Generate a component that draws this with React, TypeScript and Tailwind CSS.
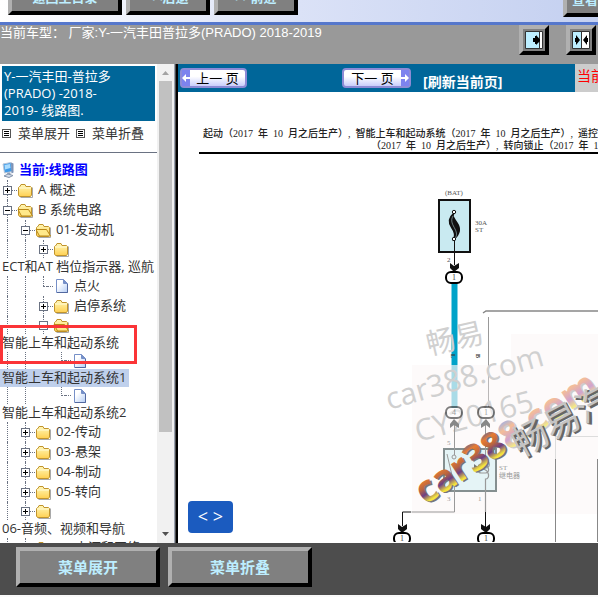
import type { ReactNode } from 'react';

type RowProps = {
  level?: number;
  sign?: '+' | '-';
  icon: 'folder' | 'open' | 'page';
  label?: string;
  wrapped?: string;
  selected?: boolean;
};

const rows: RowProps[] = [
  { level: 0, sign: '+', icon: 'folder', label: 'A 概述' },
  { level: 0, sign: '-', icon: 'open', label: 'B 系统电路' },
  { level: 1, sign: '-', icon: 'open', label: '01-发动机' },
  { level: 2, sign: '+', icon: 'folder', wrapped: 'ECT和AT 档位指示器, 巡航' },
  { level: 2, icon: 'page', label: '点火' },
  { level: 2, sign: '+', icon: 'folder', label: '启停系统' },
  { level: 2, sign: '-', icon: 'open', wrapped: '智能上车和起动系统' },
  { level: 3, icon: 'page', wrapped: '智能上车和起动系统1', selected: true },
  { level: 3, icon: 'page', wrapped: '智能上车和起动系统2' },
  { level: 1, sign: '+', icon: 'folder', label: '02-传动' },
  { level: 1, sign: '+', icon: 'folder', label: '03-悬架' },
  { level: 1, sign: '+', icon: 'folder', label: '04-制动' },
  { level: 1, sign: '+', icon: 'folder', label: '05-转向' },
  { level: 1, sign: '+', icon: 'folder', wrapped: '06-音频、视频和导航' },
  { level: 1, sign: '+', icon: 'folder', label: '07-电源和网络' },
];

const FolderIcon = ({ open }: { open?: boolean }) => (
  <svg width="18" height="18" viewBox="0 0 18 18" className="shrink-0">
    <defs>
      <linearGradient id="folder" x1="0" y1="0" x2="0" y2="1">
        <stop offset="0" stopColor="#fff8b8" />
        <stop offset="1" stopColor="#ffd052" />
      </linearGradient>
    </defs>
    <path d="M3.5 16.5h12v-10" fill="none" stroke="#a9a9a9" />
    <path
      d="M1.5 14V6.5l1-1H3l1-2h4l1 2h4.5l1 1V14l-1 1.5h-11z"
      fill="url(#folder)"
      stroke="#c1942c"
    />
    {open ? (
      <path d="M1 8.5h10.5l4 6.5H4.5z" fill="#ffe98a" stroke="#b98716" />
    ) : (
      <path d="M2 7h12" stroke="#fffbd6" />
    )}
  </svg>
);

const PageIcon = () => (
  <svg width="18" height="18" viewBox="0 0 18 18" className="shrink-0">
    <defs>
      <linearGradient id="page" x1="0" y1="0" x2="1" y2="1">
        <stop offset="0.3" stopColor="#fff" />
        <stop offset="1" stopColor="#b4cdf5" />
      </linearGradient>
    </defs>
    <path d="M3.5 2.5h7l4 4v9h-11z" fill="url(#page)" stroke="#7690c8" />
    <path d="M10.5 2.5v4h4" fill="#7690c8" stroke="#7690c8" />
    <path d="M4 15.5h10.5V7" fill="none" stroke="#52689f" />
  </svg>
);

const Toggle = ({ sign }: { sign: '+' | '-' }) => (
  <button
    type="button"
    aria-label={sign === '+' ? '展开' : '折叠'}
    className="relative size-[9px] shrink-0 border border-gray-500 bg-white"
  >
    <svg viewBox="0 0 7 7" className="block size-[7px]" shapeRendering="crispEdges">
      <path d={sign === '+' ? 'M1 3h5v1H1zM3 1h1v5H3z' : 'M1 3h5v1H1z'} />
    </svg>
  </button>
);

const Row = ({ level = 0, sign, icon, label, wrapped, selected }: RowProps) => (
  <li>
    <div
      className={`flex items-center ${
        label ? 'h-5' : icon === 'page' ? 'h-[17px]' : 'h-[18px]'
      }`}
    >
      {Array.from({ length: level }, (_, i) => (
        <span key={i} className="flex w-[18px] shrink-0 justify-center self-stretch pr-[3px]">
          {i < 2 && <span className="border-l border-dotted border-gray-500" />}
        </span>
      ))}
      <span className="relative flex w-[17px] shrink-0 items-center self-stretch pl-[3px]">
        <span
          className={`absolute top-0 left-[7px] border-l border-dotted border-gray-500 ${
            sign ? 'bottom-0' : 'bottom-1/2'
          }`}
        />
        {sign ? (
          <Toggle sign={sign} />
        ) : (
          <span className="ml-1 w-1 border-t border-dotted border-gray-500" />
        )}
        <span className="flex-1 border-t border-dotted border-gray-500" />
      </span>
      {icon === 'page' ? <PageIcon /> : <FolderIcon open={icon === 'open'} />}
      {label && (
        <a href="#" className="pl-[3px] whitespace-nowrap">
          {label}
        </a>
      )}
    </div>
    {wrapped && (
      <div className="flex h-[18px] whitespace-nowrap">
        <a
          href="#"
          className={`flex items-center pr-[3px] pl-0.5 ${selected ? 'bg-[#bfd0ec]' : ''}`}
        >
          {wrapped}
        </a>
      </div>
    )}
  </li>
);

const BevelButton = ({ children, className = '' }: { children: ReactNode; className?: string }) => (
  <button
    type="button"
    className={`shrink-0 border-4 border-t-[#b0b0b0] border-r-black border-b-black border-l-[#b0b0b0] bg-[#808080] font-bold whitespace-nowrap text-[#bdeeff] ${className}`}
  >
    {children}
  </button>
);

const ListIcon = () => (
  <svg width="9" height="9" viewBox="0 0 9 9" shapeRendering="crispEdges" className="shrink-0">
    <path d="M.5.5h8v8h-8z" fill="#fff" stroke="#555" />
    <path d="M2 2h5v1H2zM2 4h5v1H2zM2 6h5v1H2z" />
  </svg>
);

const Sidebar = () => (
  <aside className="flex w-[178px] shrink-0 text-[13px] text-[#333]">
    <div className="min-w-0 flex-1 overflow-hidden bg-white">
      <h1 className="mx-0.5 mt-0.5 bg-[#006699] px-0.5 pt-0.5 pb-0.5 leading-[17px] text-white">
        Y-一汽丰田-普拉多 <br />
        (PRADO) -2018-
        <br />
        2019- 线路图.
      </h1>
      <div className="flex h-8 items-center border-b border-gray-500 pb-1.5 pl-0.5 whitespace-nowrap">
        <ListIcon />
        <a href="#" className="pr-1.5 pl-[7px]">
          菜单展开
        </a>
        <ListIcon />
        <a href="#" className="pl-[7px]">
          菜单折叠
        </a>
      </div>
      <div className="mt-[7px] flex h-5 items-center font-bold text-[#0000ff]">
        <svg width="18" height="18" viewBox="0 0 18 18" className="shrink-0">
          <path d="M3 3l8-1.5 1.500 9-8 1.500z" fill="#3f9be8" stroke="#b9c6d8" />
          <path d="M4.500 4l5.500-1 .5 4-5.500 1.500z" fill="#a9dcff" />
          <path d="M11 1.500l2.500 1v9l-2 1z" fill="#7d92b5" />
          <path d="M7 12l3-.5 1 2-3 1z" fill="#8fa0b8" />
          <path d="M4 15l4-2 5 1.500-4 2z" fill="#d6deea" stroke="#8493ab" />
        </svg>
        <a href="#" className="pl-px">
          当前:线路图
        </a>
      </div>
      <ul>
        {rows.map((row, i) => (
          <Row key={i} {...row} />
        ))}
      </ul>
    </div>
    <div className="flex w-[17px] shrink-0 flex-col items-center bg-[#f1f1f1]">
      <svg width="17" height="17" viewBox="0 0 17 17" className="shrink-0">
        <path d="M5 11l3.5-4 3.5 4z" fill="#a3a3a3" />
      </svg>
      <div className="w-[13px] flex-[351] bg-[#c1c1c1]" />
      <div className="flex-[94]" />
      <svg width="17" height="17" viewBox="0 0 17 17" className="shrink-0">
        <path d="M5 6l3.5 4L12 6z" fill="#505050" />
      </svg>
    </div>
    <div className="w-1 shrink-0 border-r-2 border-l border-r-black border-l-gray-400 bg-[#4d4d4d]" />
  </aside>
);

const PageButton = ({ label, next }: { label: string; next?: boolean }) => (
  <button
    type="button"
    className={`flex h-5 items-stretch rounded-sm border-2 border-[#8d8bd6] bg-linear-to-b from-white from-40% to-[#c9cdfa] text-[13px] leading-4 text-black ${
      next ? 'w-[69px] flex-row-reverse' : 'w-[67px]'
    }`}
  >
    <span className="flex w-2 items-center justify-center bg-[#7d83ee]">
      <svg width="8" height="8" viewBox="0 0 8 8">
        <path
          d={next ? 'M0 3h4V0l4 4-4 4V5H0z' : 'M8 3H4V0L0 4l4 4V5h4z'}
          fill="#fff"
        />
      </svg>
    </span>
    <span className="flex-1 whitespace-nowrap">{label}</span>
  </button>
);

const Terminal = ({ x, y, faded, label = '1' }: { x: number; y: number; faded?: boolean; label?: string }) => (
  <g opacity={faded ? 0.5 : 1}>
    <rect x={x - 8} y={y - 5} width="16" height="11" rx="5" fill="#fff" stroke="#000" strokeWidth="2" />
    <text x={x} y={y + 3} textAnchor="middle" fontSize="8" fill="#444">
      {label}
    </text>
  </g>
);

const Diagram = () => (
  <svg
    width="420"
    height="388"
    viewBox="178 155 420 388"
    className="block shrink-0 font-['Liberation_Serif','Noto_Sans_CJK_SC',serif]"
  >
    <defs>
      <linearGradient id="rainbow" x1="0" y1="0" x2="0" y2="1">
        <stop offset="0.2" stopColor="#4a5fa8" />
        <stop offset="0.35" stopColor="#e77c32" />
        <stop offset="0.5" stopColor="#b9653f" />
        <stop offset="0.62" stopColor="#6c3f86" />
        <stop offset="0.76" stopColor="#f4e53c" />
      </linearGradient>
      <linearGradient id="rainbowPale" x1="0" y1="0" x2="0" y2="1">
        <stop offset="0.25" stopColor="#a8b4dd" />
        <stop offset="0.4" stopColor="#f4bd98" />
        <stop offset="0.6" stopColor="#d0a3cf" />
        <stop offset="0.76" stopColor="#f3ea86" />
      </linearGradient>
    </defs>
    <g fill="#555" fontSize="7">
      <text x="445" y="196">(BAT)</text>
      <text x="475" y="226">30A</text>
      <text x="475" y="233">ST</text>
      <text x="447" y="263">2</text>
    </g>
    <rect x="439" y="201" width="31" height="52" fill="#c9eaf1" stroke="#111" strokeWidth="2" />
    <path
      d="M454 214c-7 6-5 11-2 15s3 8 2 11c6-5 7-10 3-16s-5-7-3-10z"
      fill="#111"
      stroke="#111"
      strokeWidth="1.5"
    />
    <path d="M453 217c-3 5 0 9 2 13s2 7 0 9" fill="none" stroke="#c9eaf1" strokeWidth="0.5" />
    <circle cx="454" cy="213" r="1.7" fill="#fff" stroke="#111" />
    <circle cx="454" cy="240" r="1.7" fill="#fff" stroke="#111" />
    <path d="M454.5 242v24" stroke="#111" />
    <path d="M450 264l4 3 5-3v5l-5 4-4-4z" fill="#111" />
    <path d="M454.5 284v82" stroke="#00a3c9" strokeWidth="6" />
    <path d="M454.5 366v43" stroke="#7fcfe2" strokeWidth="6" />
    <Terminal x={454} y={278} />
    <path d="M483 314l3-2h112" fill="none" stroke="#888" strokeWidth="1.5" />
    <path d="M488.5 318v90" stroke="#999" />
    <path d="M412 366h99V335h87v180H412z" fill="#f8f0f0" opacity="0.35" />
    <g fill="#d0d0d0" className="font-['Open_Sans','Noto_Sans_CJK_SC',sans-serif]">
      <text transform="translate(429 356) rotate(-13)" fontSize="29">
        畅易
      </text>
      <text transform="translate(389 411) rotate(-16)" fontSize="30">
        car388.com
      </text>
      <text transform="translate(418 443) rotate(-15)" fontSize="30">
        CY20165
      </text>
    </g>
    <g fill="#333" fontSize="6" fontWeight="bold">
      <text transform="translate(451 355) rotate(90)">L</text>
      <text transform="translate(476 355) rotate(90)">B</text>
    </g>
    <Terminal x={454} y={413} faded label="4" />
    <Terminal x={486} y={413} faded />
    <g fill="none" stroke="#999">
      <rect x="444" y="450" width="52" height="42" fill="#def3f5" fillOpacity="0.8" stroke="#858f90" strokeWidth="2" />
      <path d="M454.5 425v31M485.500 425v37" />
      <path d="M447 455l7 30M454.5 487v26h-43" />
      <circle cx="454" cy="458" r="2" />
      <circle cx="454" cy="485" r="2" />
      <path
        d="M485.5 462c5 0 5 7 0 7h-4c-4 0-4-4 0-4 8 0 9 9 4 9h-4c-4 0-4-4 0-4 8 0 9 10 4 10v33"
        strokeWidth="1.2"
      />
    </g>
    <path d="M474 465l4 3-4 2z" fill="#777" />
    <path d="M450 425l4-5 5 5v4l-5-3-4 3zM481 425l5-5 4 5v4l-4-3-5 3z" fill="#888" />
    <path d="M555.5 437v23M555.5 437.5H598" stroke="#ddd" fill="none" />
    <path d="M555.5 460v83M597.5 460v83" stroke="#888" />
    <g fill="#999" fontSize="7">
      <text x="447" y="446">5</text>
      <text x="447" y="502">3</text>
      <text x="478" y="502">1</text>
      <text x="499" y="471">ST</text>
      <text x="499" y="479">继电器</text>
    </g>
    <path d="M411 513h-8.5v14M485.5 513v15" fill="none" stroke="#111" />
    <path
      d="M398 525l4 3 5-3v5l-5 4-4-4zM481 525l5 3 4-3v5l-4 4-5-4z"
      fill="#111"
    />
    <Terminal x={402} y={539} />
    <Terminal x={486} y={539} />
    <g
      className="font-['Open_Sans','Noto_Sans_CJK_SC',sans-serif]"
      fontSize="37"
      fontWeight="bold"
      aria-label="car388.com"
    >
      {/* one <text> per glyph so that the gradient restarts on each */}
      {[...'car388.com'].map((char, i) => {
        const offset = [0, 19, 41, 58, 79, 100, 121, 131, 150, 173][i];
        const pale = i > 4;
        return (
          <g key={i} transform={`translate(425 506) rotate(-33) translate(${offset} 0)`}>
            <text x="1" y="2" fill={pale ? '#ccc' : '#777'}>
              {char}
            </text>
            <text fill={pale ? 'url(#rainbowPale)' : 'url(#rainbow)'}>{char}</text>
          </g>
        );
      })}
    </g>
    <g
      className="font-['Noto_Sans_CJK_SC',sans-serif]"
      transform="translate(522 460) rotate(-28)"
      fontSize="36"
      fontWeight="bold"
    >
      <text fill="#666">畅易汽车</text>
      <text x="-1" y="-2" fill="#c4c4c4" fontWeight="normal">
        畅易汽车
      </text>
    </g>
  </svg>
);

const Viewer = () => (
  <main className="relative flex min-w-0 flex-1 flex-col overflow-hidden bg-white">
    <div className="flex h-7 shrink-0 bg-[#006699]">
      <div className="flex min-w-0 flex-1 items-start pt-1 pl-0.5">
        <PageButton label="上一 页" />
        <div className="ml-[95px]">
          <PageButton label="下一 页" next />
        </div>
        <a
          href="#"
          className="pt-1 pl-3 text-sm font-bold whitespace-nowrap text-white"
        >
          [刷新当前页]
        </a>
      </div>
      <div className="w-[23px] shrink-0 overflow-hidden bg-[#ccc] pt-0.5 pl-0.5 text-sm whitespace-nowrap text-[#ff0000]">
        当前位置
      </div>
    </div>
    <div className="mt-9 ml-[21px] border-b-2 border-black font-['Liberation_Serif','Noto_Sans_CJK_SC',serif] text-[10px] leading-3 font-medium whitespace-pre text-[#222]">
      <p className="pl-1">起动（2017  年  10  月之后生产）,  智能上车和起动系统（2017  年  10  月之后生产）,  遥控门锁</p>
      <p className="pl-[172px]">（2017  年  10  月之后生产）,  转向锁止（2017  年  10  月之后生产）</p>
    </div>
    <Diagram />
    <button
      type="button"
      className="absolute bottom-2.5 left-2.5 h-8 w-[45px] rounded-sm bg-[#1b5bbf] pb-0.5 text-lg leading-none font-medium text-white"
    >
      &lt; &gt;
    </button>
  </main>
);

const App = () => (
  <div className="flex h-screen flex-col overflow-hidden bg-[#fafafa] font-['Open_Sans','Noto_Sans_CJK_SC',sans-serif]">
    <div className="flex h-[25px] shrink-0 items-end overflow-hidden border-b-3 border-[#5577cc] bg-linear-to-r from-white via-[#dbe2f7] to-[#c4d0f0] text-[13px]">
      <div className="flex min-w-0 flex-1 items-end gap-1 pb-[7px] pl-2">
        <BevelButton className="h-[34px] w-[114px]">返回主目录</BevelButton>
        <BevelButton className="h-[34px] w-[84px]">&lt;&lt;后退</BevelButton>
        <BevelButton className="h-[34px] w-[84px]">&gt;&gt;前进</BevelButton>
      </div>
      <div className="w-[35px] shrink-0 overflow-hidden pb-[5px]">
        <BevelButton className="h-[34px] w-[70px]">查看全部</BevelButton>
      </div>
    </div>
    <header className="flex h-[39px] shrink-0 items-start justify-between bg-[#999] font-['Liberation_Sans','Noto_Sans_CJK_SC',sans-serif] text-[13px] leading-4 text-white">
      <p className="whitespace-nowrap">当前车型：  厂家:Y-一汽丰田普拉多(PRADO) 2018-2019</p>
      <div className="flex gap-[17px] pr-0.5">
        <BevelButton className="size-[30px]">
          <svg width="22" height="22" viewBox="0 0 22 22">
            <path d="M2.5 2.5h17v17h-17z" fill="#bdeeff" stroke="#333" />
            <path d="M18 3v16" stroke="#fff" strokeWidth="2" />
            <path d="M16.5 3v16" stroke="#333" />
            <path d="M10 9h2V7h1V6l4 4.500V12l-4 4v-1h-1v-2h-2z" />
          </svg>
        </BevelButton>
        <BevelButton className="size-[30px]">
          <svg width="22" height="22" viewBox="0 0 22 22">
            <path d="M2.5 2.5h17v17h-17z" fill="#bdeeff" stroke="#333" />
            <path d="M12 3h7v16h-7z" fill="#fff" />
            <path d="M11.5 3v16" stroke="#333" />
            <path d="M5 9h1V6l4 5-4 5v-3H5zM18 9h-1V6l-4 5 4 5v-3h1z" />
          </svg>
        </BevelButton>
      </div>
    </header>
    <div className="relative flex min-h-0 flex-1">
      <Sidebar />
      <Viewer />
      <div className="absolute top-[261px] left-0 h-[39px] w-[137px] border-3 border-[#fb3437]" />
    </div>
    <footer className="mb-0.5 flex h-[52px] shrink-0 items-start gap-2 bg-[#4d4d4d] pt-1 pl-4 text-[15px]">
      <BevelButton className="h-10 w-36">菜单展开</BevelButton>
      <BevelButton className="h-10 w-36">菜单折叠</BevelButton>
    </footer>
  </div>
);

export default App;
